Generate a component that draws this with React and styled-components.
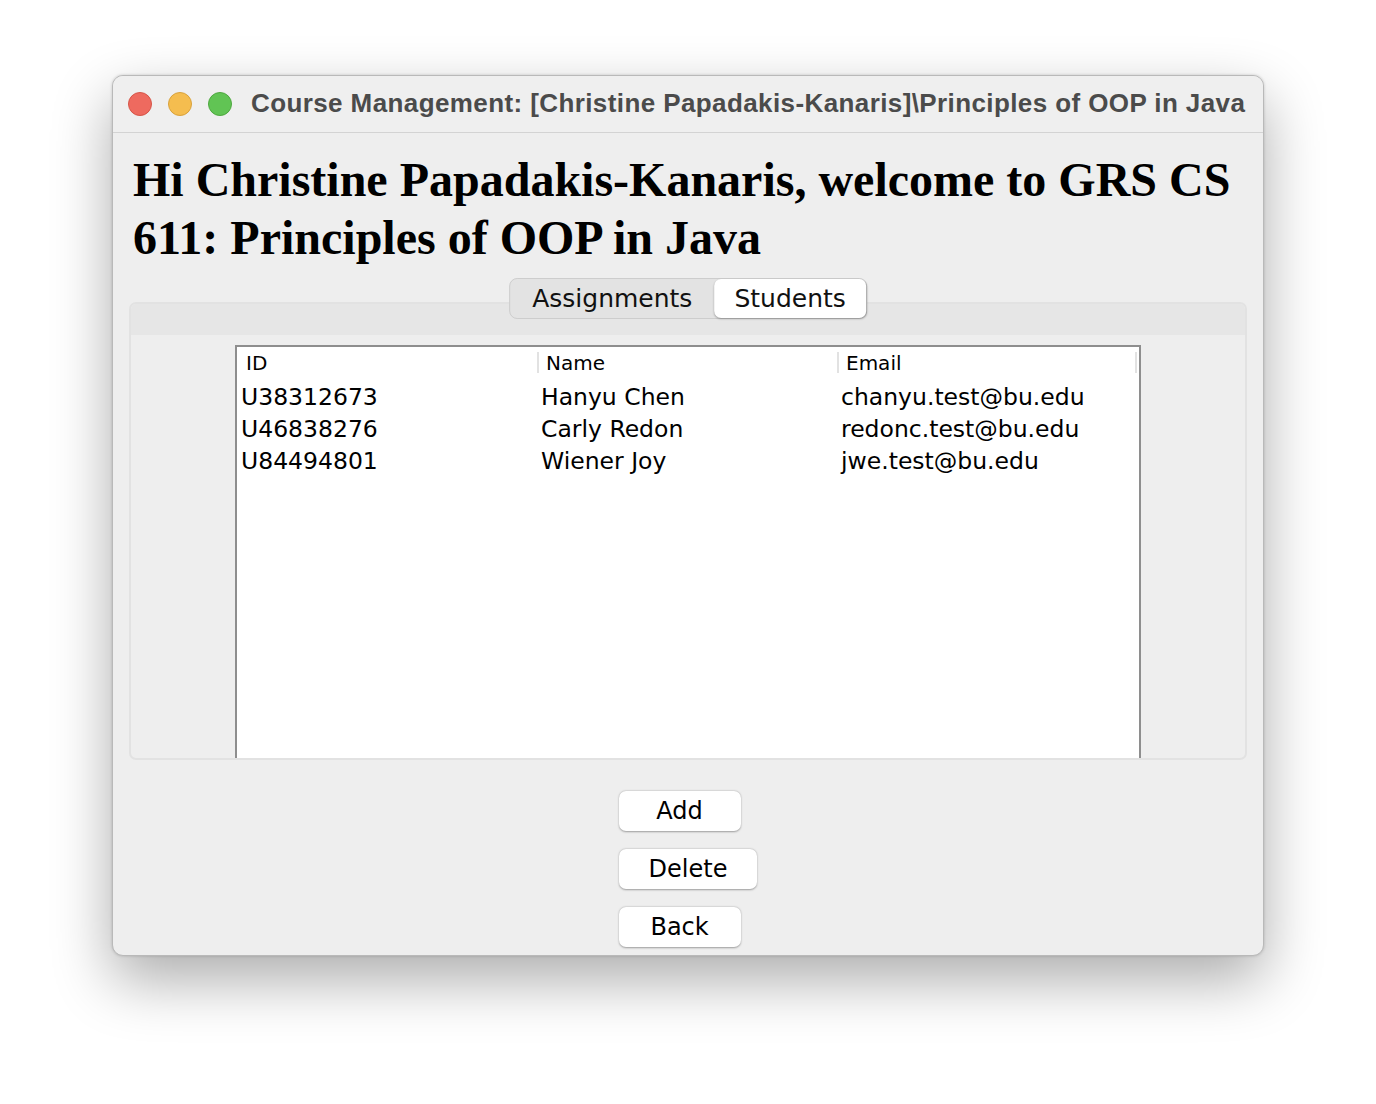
import React from "react"
import styled, { createGlobalStyle } from "styled-components"

const GlobalStyle = createGlobalStyle`
  html, body {
    margin: 0;
    padding: 0;
    background: #ffffff;
  }
`

const students = [
  { id: "U38312673", name: "Hanyu Chen", email: "chanyu.test@bu.edu" },
  { id: "U46838276", name: "Carly Redon", email: "redonc.test@bu.edu" },
  { id: "U84494801", name: "Wiener Joy", email: "jwe.test@bu.edu" },
]

const Page = styled.div`
  padding: 75px 0 0 112px;
  height: 1104px;
  box-sizing: border-box;
`

const Window = styled.div`
  width: 1152px;
  height: 881px;
  box-sizing: border-box;
  border-radius: 11px;
  border: 1px solid #b9b9b9;
  background: #eeeeee;
  box-shadow: 0 24px 60px rgba(0, 0, 0, 0.33), 0 0 3px rgba(0, 0, 0, 0.18);
  display: flex;
  flex-direction: column;
  overflow: hidden;
`

const TitleBar = styled.div`
  height: 57px;
  flex: none;
  box-sizing: border-box;
  border-bottom: 1px solid #d3d3d3;
  background: #efefef;
  display: flex;
  align-items: center;
  padding: 0 0 1px 15px;
  gap: 16px;
`

const Lights = styled.div`
  display: flex;
  gap: 16px;
`

const Light = styled.span`
  width: 24px;
  height: 24px;
  border-radius: 50%;
  box-sizing: border-box;
  background: ${p => p.color};
  border: 1px solid ${p => p.edge};
`

const Title = styled.div`
  font-family: "Liberation Sans", Arial, sans-serif;
  font-weight: bold;
  font-size: 26px;
  letter-spacing: 0.4px;
  color: #4b4b4b;
  white-space: nowrap;
  margin-left: 3px;
`

const Content = styled.div`
  flex: 1;
  display: flex;
  flex-direction: column;
  padding: 0 16px 10px 16px;
`

const Heading = styled.h1`
  margin: 18px -12px 0 4px;
  font-family: "Liberation Serif", "Times New Roman", serif;
  font-weight: bold;
  font-size: 48px;
  line-height: 58px;
  color: #000000;
`

const TabPane = styled.div`
  position: relative;
  margin-top: 35px;
  height: 458px;
  box-sizing: border-box;
  border: 2px solid #e2e2e2;
  border-radius: 7px;
  background: #eeeeee;
  display: flex;
  flex-direction: column;
`

const TabBand = styled.div`
  height: 31px;
  flex: none;
  background: #e6e6e6;
  border-radius: 5px 5px 0 0;
`

const Tabs = styled.div`
  position: absolute;
  top: -26px;
  left: 50%;
  transform: translateX(-50%);
  display: flex;
  height: 41px;
  box-sizing: border-box;
  border: 1px solid #cdcdcd;
  border-radius: 8px;
  background: #e3e3e3;
`

const Tab = styled.div`
  font-family: "DejaVu Sans", "Lucida Grande", sans-serif;
  font-size: 25px;
  color: #111111;
  display: flex;
  align-items: center;
  padding: 0 ${p => (p.active ? "20px" : "22px")};
  border-radius: 7px;
  background: ${p => (p.active ? "#ffffff" : "transparent")};
  box-shadow: ${p => (p.active ? "0 1px 2px rgba(0,0,0,0.3)" : "none")};
`

const PaneBody = styled.div`
  flex: 1;
  display: flex;
  justify-content: center;
  padding-top: 10px;
  min-height: 0;
`

const Scroll = styled.div`
  width: 906px;
  flex: none;
  box-sizing: border-box;
  border: 2px solid #8e8e8e;
  border-bottom: none;
  background: #ffffff;
`

const Table = styled.table`
  border-collapse: collapse;
  table-layout: fixed;
  width: 900px;
  font-family: "DejaVu Sans", "Lucida Grande", sans-serif;
  color: #000000;
`

const Col = styled.col`
  width: 300px;
`

const Head = styled.th`
  text-align: left;
  vertical-align: top;
  font-weight: normal;
  font-size: 20px;
  height: 34px;
  box-sizing: border-box;
  padding: 5px 0 0 0;
`

const HeadInner = styled.div`
  display: flex;
  align-items: center;
  height: 21px;
  padding-left: 7px;
  border-left: ${p => (p.first ? "2px solid transparent" : "2px solid #e2e2e2")};
  border-right: ${p => (p.last ? "2px solid #e2e2e2" : "none")};
`

const Cell = styled.td`
  font-size: 23.5px;
  height: 32px;
  padding: 0 0 0 4px;
  white-space: nowrap;
`

const Buttons = styled.div`
  margin-top: 31px;
  align-self: center;
  display: flex;
  flex-direction: column;
  align-items: flex-start;
  gap: 18px;
`

const Button = styled.button`
  height: 40px;
  min-width: 122px;
  padding: 0 30px;
  box-sizing: border-box;
  border: none;
  border-radius: 7px;
  background: #ffffff;
  box-shadow: 0 0.5px 2px rgba(0, 0, 0, 0.35);
  font-family: "DejaVu Sans", "Lucida Grande", sans-serif;
  font-size: 24px;
  color: #000000;
`

export default function App() {
  return (
    <Page>
      <GlobalStyle />
      <Window>
        <TitleBar>
          <Lights>
            <Light color="#ee6a5f" edge="#d65548" />
            <Light color="#f5bd4f" edge="#d9a23c" />
            <Light color="#61c454" edge="#4ea83f" />
          </Lights>
          <Title>Course Management: [Christine Papadakis-Kanaris]\Principles of OOP in Java</Title>
        </TitleBar>
        <Content>
          <Heading>
            Hi Christine Papadakis-Kanaris, welcome to GRS CS 611: Principles of OOP in Java
          </Heading>
          <TabPane>
            <Tabs>
              <Tab>Assignments</Tab>
              <Tab active>Students</Tab>
            </Tabs>
            <TabBand />
            <PaneBody>
              <Scroll>
                <Table>
                  <colgroup>
                    <Col />
                    <Col />
                    <Col />
                  </colgroup>
                  <thead>
                    <tr>
                      <Head>
                        <HeadInner first>ID</HeadInner>
                      </Head>
                      <Head>
                        <HeadInner>Name</HeadInner>
                      </Head>
                      <Head>
                        <HeadInner last>Email</HeadInner>
                      </Head>
                    </tr>
                  </thead>
                  <tbody>
                    {students.map(s => (
                      <tr key={s.id}>
                        <Cell>{s.id}</Cell>
                        <Cell>{s.name}</Cell>
                        <Cell>{s.email}</Cell>
                      </tr>
                    ))}
                  </tbody>
                </Table>
              </Scroll>
            </PaneBody>
          </TabPane>
          <Buttons>
            <Button>Add</Button>
            <Button>Delete</Button>
            <Button>Back</Button>
          </Buttons>
        </Content>
      </Window>
    </Page>
  )
}
